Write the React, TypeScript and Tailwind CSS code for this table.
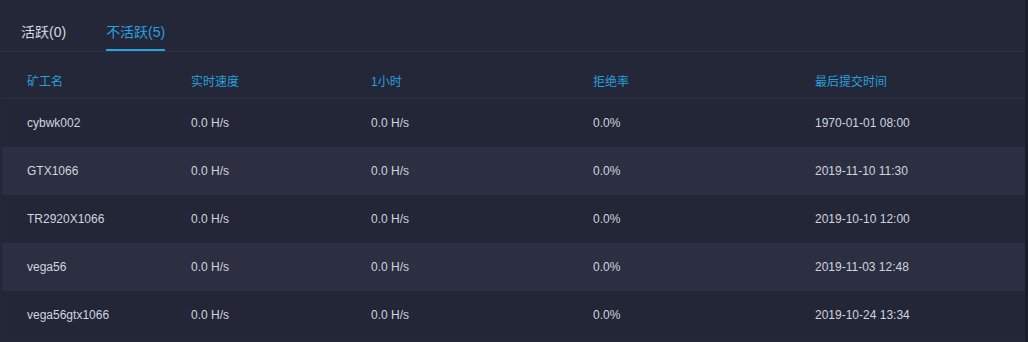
import { useState } from 'react';

/* ─── Data ─── */

const COLUMNS = [
  { label: '矿工名', width: 'w-[164px]' },
  { label: '实时速度', width: 'w-[180px]' },
  { label: '1小时', width: 'w-[222px]' },
  { label: '拒绝率', width: 'w-[222px]' },
  { label: '最后提交时间', width: 'flex-1' },
];

const WORKERS = [
  ['cybwk002', '0.0 H/s', '0.0 H/s', '0.0%', '1970-01-01 08:00'],
  ['GTX1066', '0.0 H/s', '0.0 H/s', '0.0%', '2019-11-10 11:30'],
  ['TR2920X1066', '0.0 H/s', '0.0 H/s', '0.0%', '2019-10-10 12:00'],
  ['vega56', '0.0 H/s', '0.0 H/s', '0.0%', '2019-11-03 12:48'],
  ['vega56gtx1066', '0.0 H/s', '0.0 H/s', '0.0%', '2019-10-24 13:34'],
];

const FONT = { fontFamily: '"Liberation Sans", "Noto Sans CJK SC", sans-serif' };

/* ─── Tabs ─── */

function Tabs({ active, onChange }: { active: number; onChange: (i: number) => void }) {
  const tabs = ['活跃(0)', '不活跃(5)'];
  return (
    <div className="flex h-[52px] gap-[40px] border-b border-[#2c3142] pl-[21px]">
      {tabs.map((t, i) => (
        <button
          key={t}
          onClick={() => onChange(i)}
          className={
            'relative h-full pt-[12px] text-[14px] leading-[20px] ' +
            (active === i ? 'text-[#2f9fe0]' : 'text-[#d4d8e0]')
          }
        >
          {t}
          {active === i && (
            <span className="absolute bottom-0 left-0 right-0 h-[2px] bg-[#2aa3e6]" />
          )}
        </button>
      ))}
    </div>
  );
}

/* ─── Main ─── */

export default function App() {
  const [tab, setTab] = useState(1);

  return (
    <div
      className="h-[342px] w-[1028px] overflow-hidden border-r-[3px] border-r-[#1b1e2b] bg-[#232738]"
      style={FONT}
    >
      <Tabs active={tab} onChange={setTab} />

      {/* Header */}
      <div className="flex h-[47px] border-b border-[#2c3142] pl-[2px] pt-[22px] text-[12px] leading-[16px] text-[#2a9fdc]">
        {COLUMNS.map((c) => (
          <div key={c.label} className={c.width + ' pl-[25px]'}>
            {c.label}
          </div>
        ))}
      </div>

      {/* Rows */}
      {WORKERS.map((row, r) => (
        <div
          key={row[0]}
          className={
            'ml-[2px] flex h-[48px] items-center text-[12px] text-[#d0d4de] ' +
            (r % 2 === 1 ? 'bg-[#2b2f41]' : 'bg-[#222636]')
          }
        >
          {row.map((cell, i) => (
            <div key={i} className={COLUMNS[i].width + ' pl-[25px]'}>
              {cell}
            </div>
          ))}
        </div>
      ))}
    </div>
  );
}
